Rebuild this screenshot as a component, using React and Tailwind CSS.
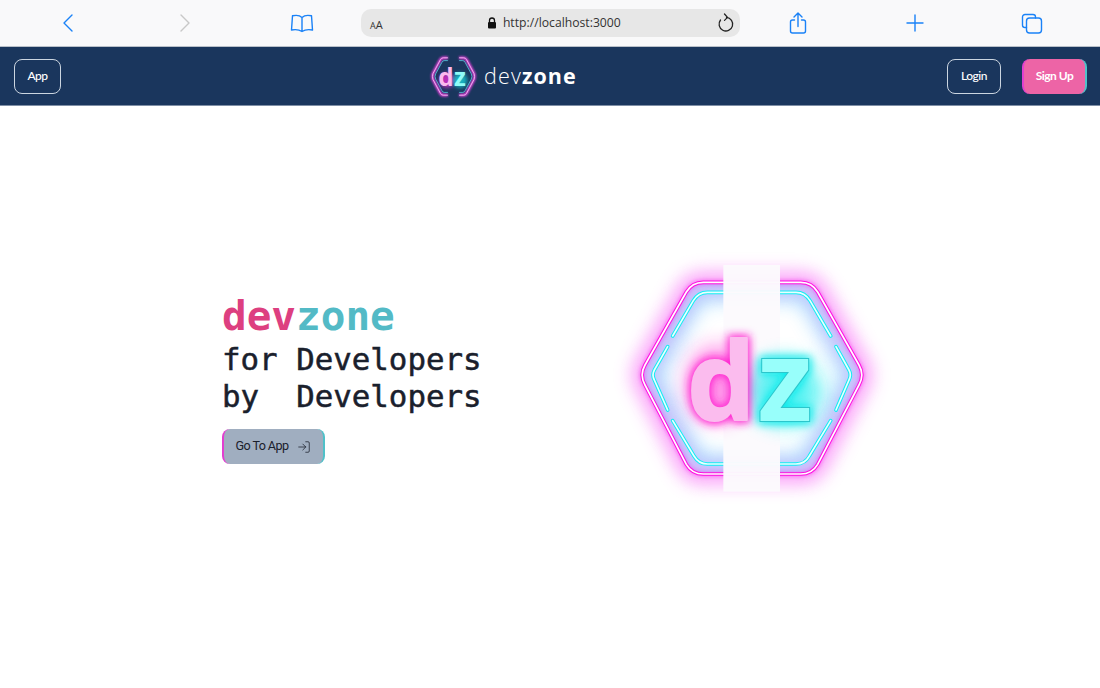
import { LogIn } from "lucide-react";

const OUTER =
  "M396 97 H250 Q216 97 199 126 L75 345 Q58 375 75 405 L199 643 Q216 672 250 672 H542 Q576 672 593 643 L717 405 Q734 375 717 345 L593 126 Q576 97 542 97 Z";

const INNER_SEGMENTS = [
  "M158 258 L220 152 Q235 127 262 127 H528 Q555 127 570 152 L632 258",
  "M143 290 L103 360 Q95 375 103 390 L143 480",
  "M648 290 L687 360 Q695 375 687 390 L648 480",
  "M158 512 L222 618 Q236 642 262 642 H528 Q555 642 568 618 L632 512",
];

const SMALL_OUTER =
  "M18 3 H13 Q11 3 10 5 L2 20 Q1 23 2 26 L10 41 Q11 43 13 43 H18 M30 3 H35 Q37 3 38 5 L46 20 Q47 23 46 26 L38 41 Q37 43 35 43 H30";

function ToolbarIcon({ children }) {
  return (
    <div className="w-[117px] flex items-center justify-center">
      <svg
        width="24"
        height="24"
        viewBox="0 0 24 24"
        fill="none"
        stroke="#1a82f7"
        strokeWidth="1.4"
        strokeLinecap="round"
        strokeLinejoin="round"
      >
        {children}
      </svg>
    </div>
  );
}

function Toolbar() {
  return (
    <div className="h-[47px] pl-[9px] bg-[#f9f9fa] border-b border-[#b9c0c9] flex items-center">
      <ToolbarIcon>
        <path d="M16 4 L8 12 L16 20" />
      </ToolbarIcon>
      <ToolbarIcon>
        <path d="M8 4 L16 12 L8 20" stroke="#c8c8c8" />
      </ToolbarIcon>
      <ToolbarIcon>
        <path d="M12 6.5 C10 4.5 6 4 2.5 4.8 L1.5 19 C5 18.3 9 18.5 12 20.5 C15 18.5 19 18.3 22.5 19 L21.5 4.8 C18 4 14 4.5 12 6.5 Z M12 6.5 V20" />
      </ToolbarIcon>

      <div className="w-[379px] h-[28px] ml-[1px] mr-[-1px] rounded-[10px] bg-[#e7e7e7] flex items-center pl-[9px] pr-[5px]">
        <span className="text-[#333] font-['Open_Sans',sans-serif] leading-none">
          <span className="text-[9px]">A</span>
          <span className="text-[11px]">A</span>
        </span>
        <div className="flex-1 flex items-center justify-center pl-[8px]">
          <svg width="10" height="12" viewBox="0 0 10 12" className="mr-[6px]">
            <path d="M2.5 5 V3.5 a2.5 2.5 0 0 1 5 0 V5" fill="none" stroke="#111" strokeWidth="1.3" />
            <rect x="1" y="5" width="8" height="6.5" rx="1" fill="#111" />
          </svg>
          <span className="text-[12.2px] text-[#333] font-['Open_Sans',sans-serif]">
            http://localhost:3000
          </span>
        </div>
        <svg
          width="18"
          height="20"
          viewBox="0 0 18 20"
          fill="none"
          stroke="#222"
          strokeWidth="1.3"
          strokeLinecap="round"
          strokeLinejoin="round"
        >
          <path d="M3.5 7 A6.8 6.8 0 1 0 9.5 4.4" />
          <path d="M7.5 1 L10.5 4.4 L7.5 7.4" />
        </svg>
      </div>

      <ToolbarIcon>
        <path d="M8.5 9 H6.5 A2 2 0 0 0 4.5 11 V20 A2 2 0 0 0 6.5 22 H17.5 A2 2 0 0 0 19.5 20 V11 A2 2 0 0 0 17.5 9 H15.5" />
        <path d="M12 15.5 V2.5 M8 6 L12 2 L16 6" />
      </ToolbarIcon>
      <ToolbarIcon>
        <path d="M12 4 V20 M4 12 H20" />
      </ToolbarIcon>
      <ToolbarIcon>
        <path d="M6.5 16.5 H5 A2.5 2.5 0 0 1 2.5 14 V6 A2.5 2.5 0 0 1 5 3.5 H13 A2.5 2.5 0 0 1 15.5 6 V7" />
        <rect x="6.5" y="7" width="15" height="15" rx="3" />
      </ToolbarIcon>
    </div>
  );
}

function SmallLogo() {
  return (
    <svg width="45" height="43" viewBox="0 0 48 46" className="overflow-visible">
      <defs>
        <filter id="small-glow" filterUnits="userSpaceOnUse" x="-10" y="-10" width="68" height="66">
          <feGaussianBlur stdDeviation="1.4" />
        </filter>
        <filter id="small-letter" filterUnits="userSpaceOnUse" x="-10" y="-10" width="68" height="66">
          <feGaussianBlur stdDeviation="2.2" />
        </filter>
      </defs>
      <g fill="none" strokeLinejoin="round">
        <path d={SMALL_OUTER} stroke="#e93fe0" strokeWidth="3" filter="url(#small-glow)" />
        <path d={SMALL_OUTER} stroke="#f3b8f0" strokeWidth="1" />
        <path d="M18 6 H14 Q12.5 6 11.5 8 L5 20 Q3.5 23 5 26 L11.5 38 Q12.5 40 14 40 H18 M30 6 H34 Q35.5 6 36.5 8 L43 20 Q44.5 23 43 26 L36.5 38 Q35.5 40 34 40 H30" stroke="#53d6e8" strokeWidth="1" opacity="0.8" />
      </g>
      <circle cx="17" cy="27" r="8" fill="#ef2bd6" opacity="0.75" filter="url(#small-letter)" />
      <circle cx="31" cy="27" r="8" fill="#18e5e8" opacity="0.7" filter="url(#small-letter)" />
      <text x="16" y="33" textAnchor="middle" fontFamily="'Open Sans', sans-serif" fontWeight="700" fontSize="26" fill="#fbb9ee">
        d
      </text>
      <text x="31" y="33" textAnchor="middle" fontFamily="'Open Sans', sans-serif" fontWeight="700" fontSize="26" fill="#8ffcf8">
        z
      </text>
    </svg>
  );
}

function Navbar() {
  return (
    <div className="h-[59px] pl-[14px] pr-[13px] bg-[#1a365d] border-b border-[#7f8fa6] flex items-center justify-between">
      <button className="w-[47px] h-[35px] rounded-lg border border-[#cbd5e0] text-white text-[12px] tracking-[-0.5px] font-['Lato',sans-serif] font-medium">
        App
      </button>

      <div className="flex items-center">
        <SmallLogo />
        <div className="ml-[8px] text-[21.5px] leading-none text-white font-['Open_Sans',sans-serif] tracking-[1.1px]">
          <span className="font-light">dev</span>
          <span className="font-bold">zone</span>
        </div>
      </div>

      <div className="flex items-center gap-[21px]">
        <button className="w-[54px] h-[35px] rounded-lg border border-[#cbd5e0] text-white text-[12px] tracking-[-0.5px] font-['Lato',sans-serif] font-medium">
          Login
        </button>
        <button className="w-[65px] h-[35px] rounded-lg bg-[#ed64a6] border-l-2 border-r-2 border-l-[#e23fd0] border-r-[#4fc1c9] text-white text-[12px] tracking-[-0.5px] font-['Lato',sans-serif] font-bold">
          Sign Up
        </button>
      </div>
    </div>
  );
}

function HeroArt() {
  const wide = { filterUnits: "userSpaceOnUse", x: -100, y: -100, width: 974, height: 950 };
  return (
    <svg width="258" height="250" viewBox="0 0 774 750" className="overflow-visible">
      <defs>
        <clipPath id="hex-clip">
          <path d={OUTER} />
        </clipPath>
        <filter id="blur-wide" {...wide}>
          <feGaussianBlur stdDeviation="27" />
        </filter>
        <filter id="blur-inner" {...wide}>
          <feGaussianBlur stdDeviation="30" />
        </filter>
        <filter id="blur-tight" {...wide}>
          <feGaussianBlur stdDeviation="6" />
        </filter>
        <filter id="blur-halo" {...wide}>
          <feGaussianBlur stdDeviation="12" />
        </filter>
        <filter id="blur-letter" {...wide}>
          <feGaussianBlur stdDeviation="30" />
        </filter>
      </defs>

      <g fill="none" strokeLinecap="round" strokeLinejoin="round">
        <path d={OUTER} stroke="#f650f4" strokeWidth="60" opacity="0.55" filter="url(#blur-wide)" />
        <path d={OUTER} stroke="#f01fe8" strokeWidth="10" filter="url(#blur-tight)" opacity="0.7" />
        <g clipPath="url(#hex-clip)">
          {INNER_SEGMENTS.map((d) => (
            <path key={d} d={d} stroke="#5cc8ff" strokeWidth="46" opacity="0.62" filter="url(#blur-inner)" />
          ))}
        </g>
        <path d={OUTER} stroke="#ff10e0" strokeWidth="11" />
        <path d={OUTER} stroke="#ffffff" strokeWidth="5" />
        {INNER_SEGMENTS.map((d) => (
          <path key={d + "c"} d={d} stroke="#12eef2" strokeWidth="11" />
        ))}
        {INNER_SEGMENTS.map((d) => (
          <path key={d + "w"} d={d} stroke="#eaffff" strokeWidth="5" />
        ))}
      </g>

      <rect x="310" y="45" width="170" height="680" fill="#fcfafd" opacity="0.97" />

      <g fontFamily="'Open Sans', sans-serif" fontWeight="700">
        <ellipse cx="290" cy="400" rx="95" ry="115" fill="#ff1fd0" opacity="0.45" filter="url(#blur-letter)" />
        <ellipse cx="495" cy="425" rx="110" ry="100" fill="#14eeee" opacity="0.7" filter="url(#blur-letter)" />
        <text x="304" y="511" fontSize="322" textAnchor="middle" fill="#ff20d0" stroke="#ff20d0" strokeWidth="18" filter="url(#blur-halo)">
          d
        </text>
        <text x="495" y="512" fontSize="338" textAnchor="middle" fill="#10eaea" stroke="#10eaea" strokeWidth="16" filter="url(#blur-halo)">
          z
        </text>
        <text x="304" y="511" fontSize="322" textAnchor="middle" fill="#fbbcee" stroke="#fbbcee" strokeWidth="6" strokeLinejoin="round">
          d
        </text>
        <text x="495" y="512" fontSize="338" textAnchor="middle" fill="#98fffb" stroke="#2bc6cc" strokeWidth="6" paintOrder="stroke">
          z
        </text>
      </g>
    </svg>
  );
}

function Hero() {
  return (
    <div className="h-[582px] pb-[44px] bg-white flex items-center justify-center gap-[138px]">
      <div className="w-[260px] mt-[7px] font-['DejaVu_Sans_Mono',monospace]">
        <div className="text-[41px] leading-[46px] mb-[2px] font-bold">
          <span className="text-[#dd3f80]">dev</span>
          <span className="text-[#53bac6]">zone</span>
        </div>
        <div className="text-[30.8px] leading-[37px] text-[#1a202c] whitespace-pre [-webkit-text-stroke:0.5px_#1a202c]">
          {"for Developers"}
        </div>
        <div className="text-[30.8px] leading-[37px] text-[#1a202c] whitespace-pre [-webkit-text-stroke:0.5px_#1a202c]">
          {"by  Developers"}
        </div>
        <button className="w-[103px] h-[35px] mt-[14px] rounded-lg bg-[#a0aec0] border-l-2 border-r-2 border-l-[#e23fd0] border-r-[#4fc1c9] text-[#1a202c] flex items-center justify-center gap-[9px] text-[12.6px] tracking-[-0.6px] font-['Roboto',sans-serif]">
          Go To App
          <LogIn size={14} strokeWidth={1.3} />
        </button>
      </div>

      <HeroArt />
    </div>
  );
}

export default function App() {
  return (
    <div className="w-[1100px] h-[688px] overflow-hidden bg-white">
      <Toolbar />
      <Navbar />
      <Hero />
    </div>
  );
}
